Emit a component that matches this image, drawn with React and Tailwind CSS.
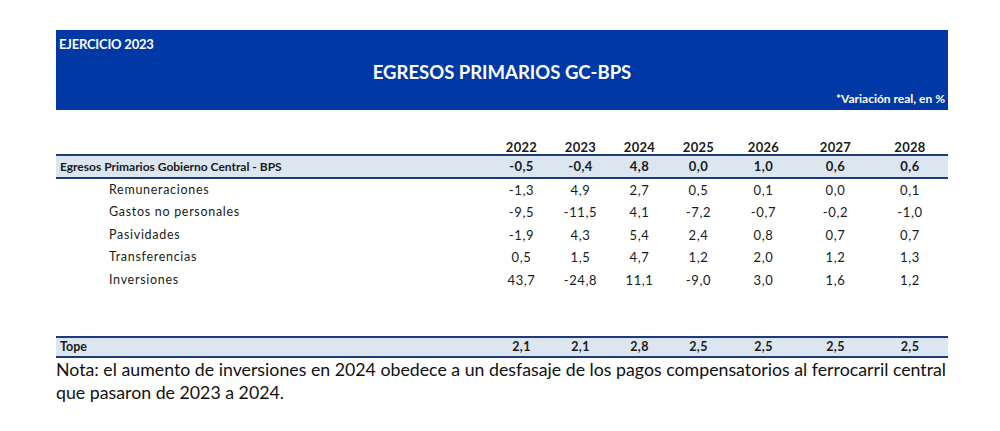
import React from 'react'

const years = ['2022', '2023', '2024', '2025', '2026', '2027', '2028']

const total = ['-0,5', '-0,4', '4,8', '0,0', '1,0', '0,6', '0,6']

const rows = [
  { label: 'Remuneraciones', values: ['-1,3', '4,9', '2,7', '0,5', '0,1', '0,0', '0,1'] },
  { label: 'Gastos no personales', values: ['-9,5', '-11,5', '4,1', '-7,2', '-0,7', '-0,2', '-1,0'] },
  { label: 'Pasividades', values: ['-1,9', '4,3', '5,4', '2,4', '0,8', '0,7', '0,7'] },
  { label: 'Transferencias', values: ['0,5', '1,5', '4,7', '1,2', '2,0', '1,2', '1,3'] },
  { label: 'Inversiones', values: ['43,7', '-24,8', '11,1', '-9,0', '3,0', '1,6', '1,2'] },
]

const tope = ['2,1', '2,1', '2,8', '2,5', '2,5', '2,5', '2,5']

// columnas de la tabla
const grid = 'grid grid-cols-[436px_59px_59px_59px_59px_71px_73px_76px] items-center'

const App = () => {
  return (
    <div className="min-h-screen bg-white pt-[30px] pl-[56px] text-[#1a1a1a] font-['Lato','Liberation_Sans',sans-serif]">
      <div className="w-[892px]">
        {/* Encabezado azul */}
        <div className="h-[80px] bg-[#0039a6] text-white flex flex-col px-[3px]">
          <div className="text-[13px] font-bold leading-none pt-[8px] tracking-[-0.2px]">EJERCICIO 2023</div>
          <div className="text-[18.5px] font-bold text-center leading-none mt-[12px]">EGRESOS PRIMARIOS GC-BPS</div>
          <div className="text-[12px] font-bold text-right leading-none mt-auto pb-[5px]">*Variación real, en %</div>
        </div>

        {/* Años */}
        <div className={`${grid} mt-[28px] h-[16px] text-[13px] font-bold tracking-[0.3px]`}>
          <div />
          {years.map((y) => (
            <div key={y} className="text-center">{y}</div>
          ))}
        </div>

        {/* Total */}
        <div className={`${grid} h-[25px] bg-[#dce6f1] border-y-2 border-[#1f3a78] font-bold`}>
          <div className="pl-[4px] text-[12px]">Egresos Primarios Gobierno Central - BPS</div>
          {total.map((v, i) => (
            <div key={i} className="text-center text-[13px] tracking-[0.4px]">{v}</div>
          ))}
        </div>

        {/* Filas */}
        <div>
          {rows.map((r) => (
            <div key={r.label} className={`${grid} h-[22.5px]`}>
              <div className="pl-[53px] text-[12.5px] tracking-[0.7px]">{r.label}</div>
              {r.values.map((v, i) => (
                <div key={i} className="text-center text-[13px] tracking-[0.6px]">{v}</div>
              ))}
            </div>
          ))}
        </div>

        {/* Tope */}
        <div className={`${grid} mt-[44px] h-[22px] bg-[#dce6f1] border-y-2 border-[#1f3a78] text-[12.5px] font-bold`}>
          <div className="pl-[4px]">Tope</div>
          {tope.map((v, i) => (
            <div key={i} className="text-center tracking-[0.4px]">{v}</div>
          ))}
        </div>

        <p className="text-[17.75px] leading-[23px] text-[#111] w-[905px]">
          Nota: el aumento de inversiones en 2024 obedece a un desfasaje de los pagos compensatorios al ferrocarril central que pasaron de 2023 a 2024.
        </p>
      </div>
    </div>
  )
}

export default App
